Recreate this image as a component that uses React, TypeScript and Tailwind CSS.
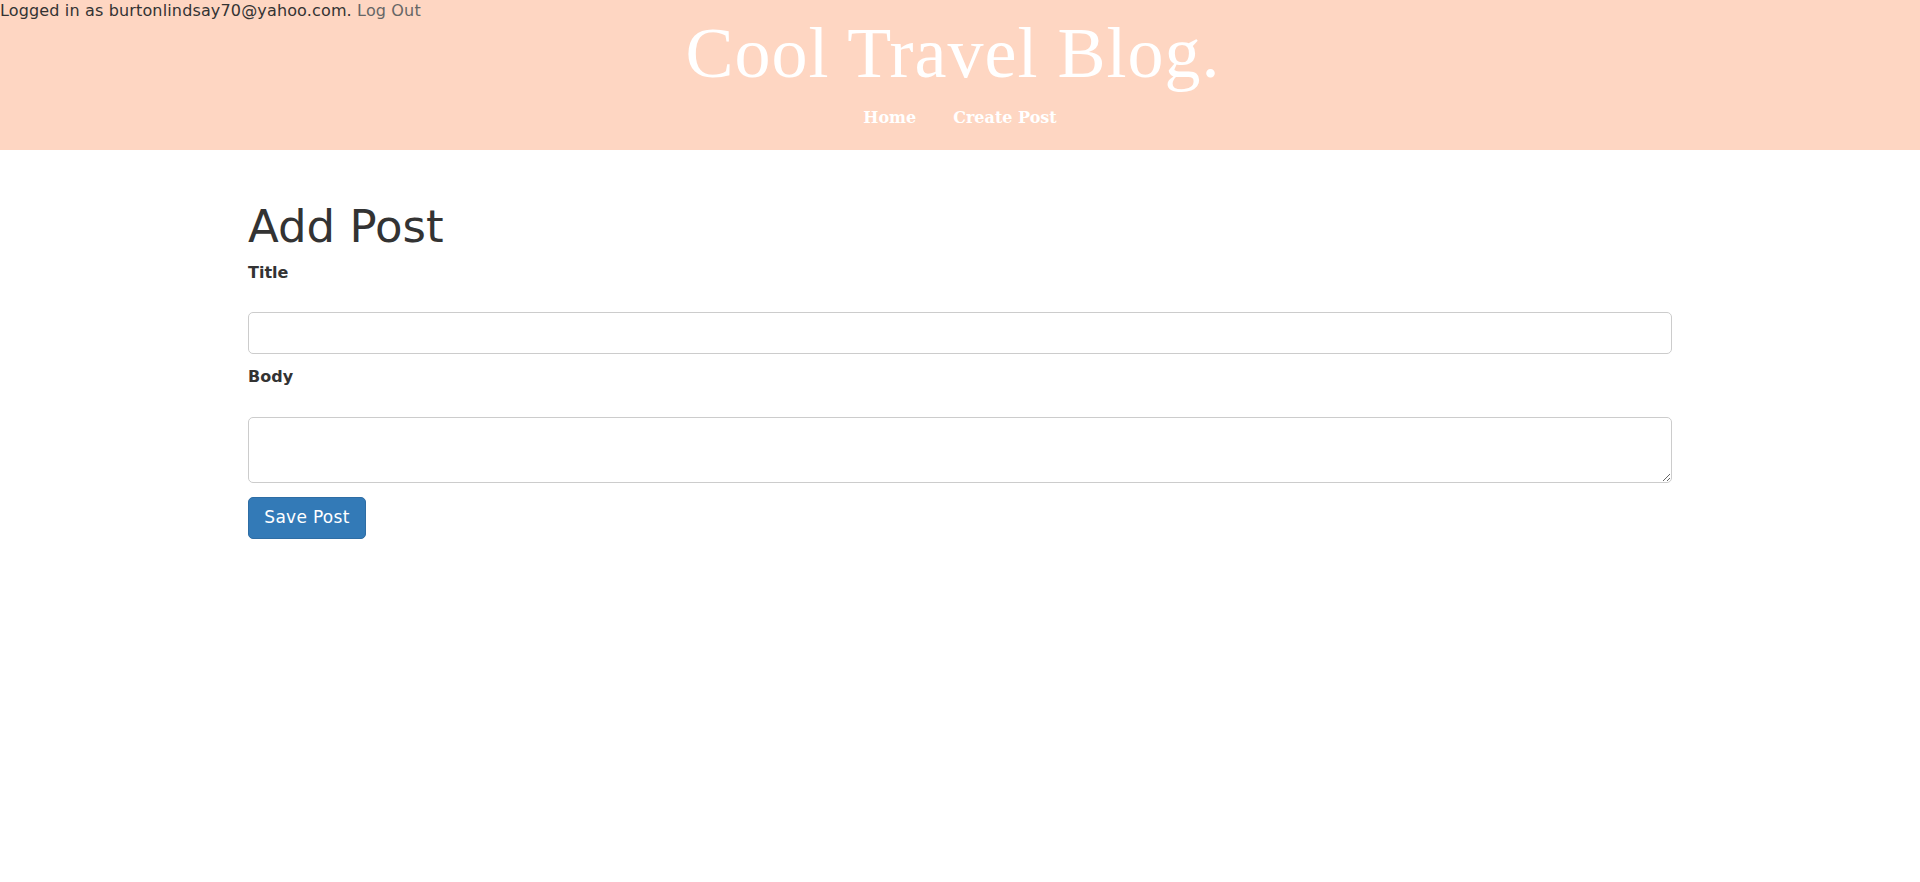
import React from "react";

export default function App() {
  return (
    <div className="min-h-screen bg-white font-['DejaVu_Sans',Verdana,sans-serif] text-[#333]">
      <header className="relative h-[150px] bg-[#fed6c2] flex flex-col items-center">
        <div className="absolute left-0 top-0 text-[16px] leading-[22px] tracking-[0.15px] text-[#333]">
          Logged in as burtonlindsay70@yahoo.com. <a className="text-[#666]" href="#">Log Out</a>
        </div>
        <h1 className="mt-[11px] mr-[14px] text-[72px] leading-[84px] font-['Liberation_Serif',serif] font-light text-white tracking-[1px]">
          Cool Travel Blog.
        </h1>
        <nav className="mt-[12px] flex gap-[37px] font-['DejaVu_Serif',serif] font-bold text-[16px] leading-[22px] text-white">
          <a href="#">Home</a>
          <a href="#">Create Post</a>
        </nav>
      </header>
      <main className="mx-auto w-[1424px] pt-[53px]">
        <h2 className="text-[45px] leading-[48px] text-[#333]">Add Post</h2>
        <div className="mt-[12px] text-[16px] leading-[20px] font-bold">Title</div>
        <input className="mt-[29px] block w-full h-[42px] rounded-[5px] border border-[#ccc] px-3" type="text" />
        <div className="mt-[13px] text-[16px] leading-[20px] font-bold">Body</div>
        <textarea className="mt-[30px] block w-full h-[66px] rounded-[5px] border border-[#ccc] px-3" />
        <button className="mt-[14px] h-[42px] w-[118px] rounded-[5px] bg-[#337ab7] border border-[#2e6da4] text-white text-[17px] tracking-[0.3px]">
          Save Post
        </button>
      </main>
    </div>
  );
}
